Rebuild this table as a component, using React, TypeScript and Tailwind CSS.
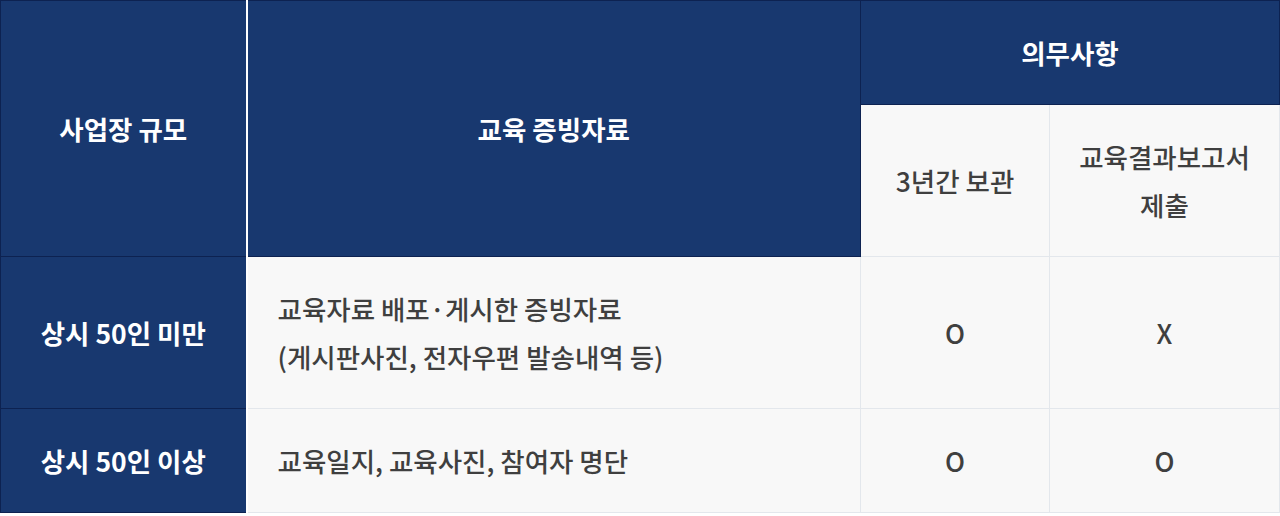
const font = "font-['Pretendard','Noto_Sans_CJK_KR','Noto_Sans',sans-serif]";

const navy = "bg-[#18386f] text-white font-bold border border-[#0d2251]";
const light = "bg-[#f8f8f8] text-[#3f3f3f] font-medium border border-[#e3e7ec]";

export default function App() {
  return (
    <main className={`min-h-screen bg-white ${font} text-[26.5px] leading-[48px]`}>
      <table className="w-full table-fixed border-collapse">
        <colgroup>
          <col className="w-[246px]" />
          <col className="w-[614px]" />
          <col className="w-[189px]" />
          <col />
        </colgroup>
        <thead>
          <tr className="h-[104px]">
            <th rowSpan={2} className={`${navy} border-r-2 border-r-white`}>
              사업장 규모
            </th>
            <th rowSpan={2} className={navy}>
              교육 증빙자료
            </th>
            <th colSpan={2} className={navy}>
              의무사항
            </th>
          </tr>
          <tr className="h-[152px]">
            <th className={light}>3년간 보관</th>
            <th className={`${light} px-[22px]`}>교육결과보고서 제출</th>
          </tr>
        </thead>
        <tbody>
          <tr className="h-[152px]">
            <td className={`${navy} border-r-2 border-r-white text-center`}>상시 50인 미만</td>
            <td className={`${light} px-[30px]`}>
              교육자료 배포·게시한 증빙자료
              <br />
              (게시판사진, 전자우편 발송내역 등)
            </td>
            <td className={`${light} text-center`}>O</td>
            <td className={`${light} text-center`}>X</td>
          </tr>
          <tr className="h-[104px]">
            <td className={`${navy} border-r-2 border-r-white text-center`}>상시 50인 이상</td>
            <td className={`${light} px-[30px]`}>교육일지, 교육사진, 참여자 명단</td>
            <td className={`${light} text-center`}>O</td>
            <td className={`${light} text-center`}>O</td>
          </tr>
        </tbody>
      </table>
    </main>
  );
}
